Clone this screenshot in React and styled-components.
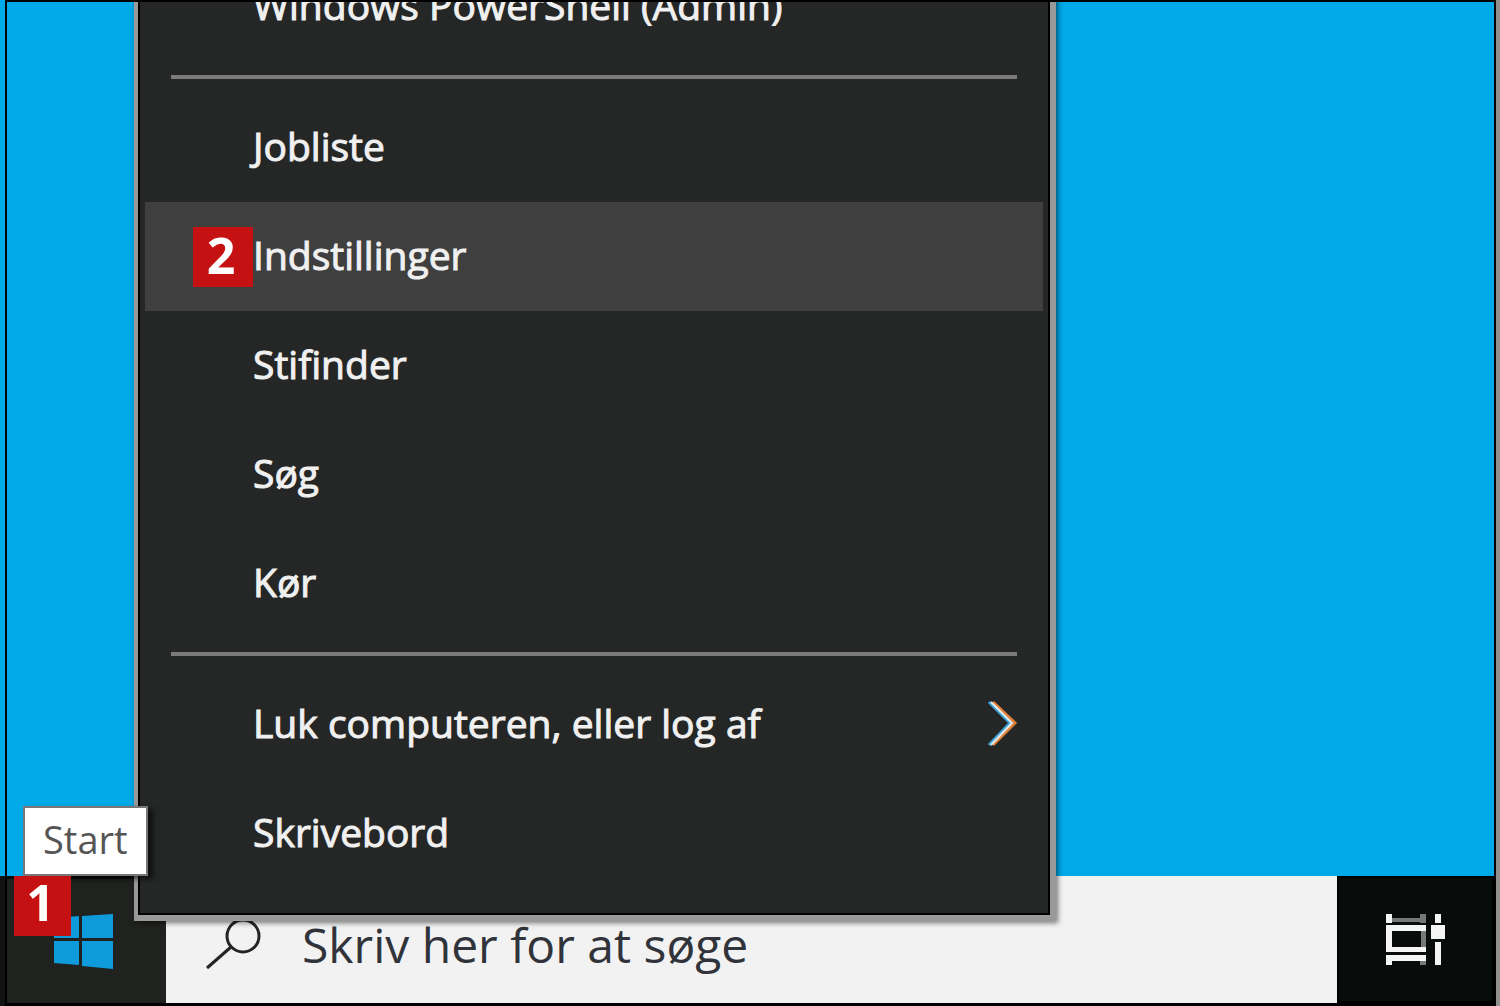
import { useState } from "react";
import styled, { createGlobalStyle } from "styled-components";

const tools = ["Jobliste", "Indstillinger", "Stifinder", "Søg", "Kør"];

export default function App() {
    const [search, setSearch] = useState('');

    return (
        <Page>
            <GlobalStyle />
            <LeftEdge />
            <Screen>
                <Desktop />
                <Taskbar>
                    <StartButton aria-label="Start">
                        <WindowsLogo />
                    </StartButton>
                    <SearchBox>
                        <SearchIcon />
                        <SearchInput
                            type="text"
                            aria-label="Søg"
                            placeholder="Skriv her for at søge"
                            value={search}
                            onChange={(e) => setSearch(e.target.value)}
                        />
                    </SearchBox>
                    <TaskViewButton aria-label="Opgavevisning">
                        <TaskViewIcon />
                    </TaskViewButton>
                </Taskbar>

                <Menu>
                    <MenuItem><Label>Windows PowerShell (Admin)</Label></MenuItem>
                    <Separator />
                    {tools.map((name) => (
                        <MenuItem key={name} $active={name === "Indstillinger"}>
                            {name === "Indstillinger" && <Badge>2</Badge>}
                            <Label>{name}</Label>
                        </MenuItem>
                    ))}
                    <Separator />
                    <MenuItem>
                        <Label>Luk computeren, eller log af</Label>
                        <Chevron />
                    </MenuItem>
                    <MenuItem><Label>Skrivebord</Label></MenuItem>
                </Menu>

                <Tooltip role="tooltip">Start</Tooltip>
                <StartBadge>1</StartBadge>
            </Screen>
            <RightEdge />
        </Page>
    )
}

function WindowsLogo() {
    return (
        <svg width="60" height="56" viewBox="0 0 60 56" fill="#0d9bdc" aria-hidden="true">
            <path d="M0 4L25 2V24H0zM28 2L59 0V24H28zM0 27H25V51L0 49zM28 27H59V55L28 52z" />
        </svg>
    )
}

function SearchIcon() {
    return (
        <svg width="56" height="50" viewBox="0 0 56 50" fill="none" stroke="#222524" strokeWidth="3" aria-hidden="true">
            <circle cx="37" cy="16" r="16" />
            <path d="M25 27L1 48" />
        </svg>
    )
}

function TaskViewIcon() {
    return (
        <svg width="60" height="52" viewBox="0 0 60 52" fill="#f4f5f4" aria-hidden="true">
            <path fill="#777978" d="M6 4H34V8H6zM34 0H40V9H34zM35 17H40V33H35zM34 47H40V51H34z" />
            <path d="M0 0H6V9H0zM0 11H40V17H6V33H40V38H0zM0 41H40V47H6V51H0z" />
            <path d="M49 0H55V9H49zM45 11H59V25H45zM49 28H55V51H49z" />
        </svg>
    )
}

function Chevron() {
    return (
        <svg width="30" height="52" viewBox="0 0 30 52" fill="none" strokeWidth="3" aria-hidden="true">
            <path stroke="#3fa3dc" d="M2 3L23 24L2 46" />
            <path stroke="#e0813a" d="M6 3L28 24L6 46" />
            <path stroke="#e4ebe6" strokeWidth="2" d="M4 3L25 24L4 46" />
        </svg>
    )
}

const GlobalStyle = createGlobalStyle`
    * {
        box-sizing: border-box;
    }
    body {
        margin: 0;
        font-family: "Open Sans", "Noto Sans", sans-serif;
    }
    button, input {
        font-family: inherit;
        border: none;
        border-radius: 0;
        padding: 0;
        margin: 0;
    }
`
const Page = styled.div`
    display: flex;
    height: 100vh;
    overflow: hidden;
`
const LeftEdge = styled.div`
    width: 5px;
    background: linear-gradient(#00aae9 calc(100% - 130px), #111312 0);
`
const RightEdge = styled.div`
    width: 4px;
    background: #8f8f8f;
`
const Screen = styled.main`
    position: relative;
    flex: 1;
    min-width: 0;
    display: flex;
    flex-direction: column;
    overflow: hidden;
    border: 2px solid #000;
    border-bottom-width: 3px;
`
const Desktop = styled.div`
    flex: 1;
    background: #00aae9;
`
const Taskbar = styled.footer`
    display: flex;
    height: 127px;
`
const StartButton = styled.button`
    width: 159px;
    padding: 6px 0 0 47px;
    text-align: left;
    background: #20221f;
    border-top: 3px solid #090b0a;
`
const SearchBox = styled.label`
    flex: 1;
    display: flex;
    align-items: center;
    gap: 40px;
    padding: 10px 40px 0;
    background: #f2f2f2;
`
const SearchInput = styled.input`
    flex: 1;
    min-width: 0;
    height: 72px;
    outline: none;
    background: transparent;
    font-size: 48px;
    color: #30343a;
    &::placeholder {
        color: #30343a;
        opacity: 1;
    }
`
const TaskViewButton = styled.button`
    display: flex;
    align-items: center;
    justify-content: center;
    width: 157px;
    background: #080c0a;
    border: 2px solid #000;
`
const Menu = styled.nav`
    position: absolute;
    left: 127px;
    bottom: 82px;
    width: 62%;
    padding: 0 7px 27px;
    background: #252726;
    border: 6px solid #999;
    border-left-width: 4px;
    box-shadow: inset 0 0 0 2px #000, 2px 2px 5px rgba(0, 0, 0, 0.5);
`
const MenuItem = styled.button`
    display: grid;
    grid-template-columns: 108px 1fr auto;
    align-items: center;
    width: 100%;
    height: 109px;
    padding-right: 26px;
    text-align: left;
    color: #f0f0f0;
    background: ${(props) => (props.$active ? "#3f3f3f" : "transparent")};
`
const Label = styled.span`
    grid-column: 2;
    padding-bottom: 4px;
    font-size: 39px;
    line-height: 56px;
    white-space: nowrap;
    -webkit-text-stroke: 1px #f0f0f0;
`
const Separator = styled.hr`
    height: 4px;
    margin: 14px 26px;
    border: none;
    background: #7b7b7b;
`
const Badge = styled.span`
    display: flex;
    align-items: center;
    justify-content: center;
    justify-self: end;
    width: 60px;
    height: 60px;
    padding: 0 4px 4px 0;
    font-size: 50px;
    line-height: 56px;
    font-weight: 700;
    color: #fff;
    background: #c61112;
`
const StartBadge = styled(Badge)`
    position: absolute;
    left: 7px;
    bottom: 67px;
    width: 57px;
    padding-bottom: 8px;
`
const Tooltip = styled.div`
    position: absolute;
    left: 16px;
    bottom: 127px;
    padding: 4px 18px 8px;
    font-size: 38px;
    line-height: 54px;
    color: #555;
    background: #fff;
    border: 2px solid #777;
    box-shadow: 5px 3px 5px rgba(0, 0, 0, 0.6);
`
